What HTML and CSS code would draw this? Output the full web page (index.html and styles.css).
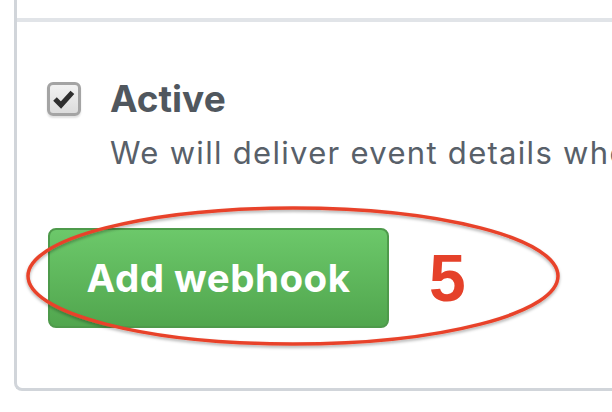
FILE: index.html
```html
<!DOCTYPE html>
<html lang="en">
<head>
  <meta charset="UTF-8" />
  <title>Add webhook</title>
  <meta name="viewport" content="width=device-width, initial-scale=1" />
  <link rel="stylesheet" href="styles.css">
</head>
<body>
  <div class="panel">
    <div class="panel-top"></div>

    <div class="section">
      <label class="option">
        <span class="checkbox">
          <svg viewBox="0 0 20 20" width="24" height="24">
            <path d="M2.5 10 L7.5 15 L17 4.5" fill="none" stroke="#2f2f2f" stroke-width="4.2" stroke-linejoin="miter" />
          </svg>
        </span>
        <span class="option-text">
          <span class="option-title">Active</span>
          <span class="option-note">We will deliver event details when this hook is triggered.</span>
        </span>
      </label>

      <div class="actions">
        <button class="btn-primary">Add webhook</button>
        <span class="step">5</span>
      </div>
    </div>
  </div>

  <!-- annotation drawn over the screenshot -->
  <svg class="callout" width="612" height="412" viewBox="0 0 612 412">
    <defs>
      <filter id="shadow" x="-10%" y="-10%" width="120%" height="130%">
        <feDropShadow dx="0" dy="2" stdDeviation="1.5" flood-color="#000" flood-opacity="0.3" />
      </filter>
    </defs>
    <ellipse cx="293" cy="276" rx="265" ry="68" fill="none" stroke="#e8432a" stroke-width="3.5" filter="url(#shadow)" />
  </svg>
</body>
</html>
```

FILE: styles.css
```css
* {
  box-sizing: border-box;
}
html, body {
  height: 100%;
}
body {
  margin: 0;
  position: relative;
  overflow: hidden;
  background: #fff;
  font-family: Inter, "Liberation Sans", Arial, sans-serif;
}
.panel {
  margin-left: 14px;
  width: 640px;
  height: 391px;
  border-left: 3px solid #d1d5da;
  border-bottom: 3px solid #d1d5da;
  border-bottom-left-radius: 8px;
}
.panel-top {
  height: 18px;
}
.section {
  border-top: 4px solid #e1e4e8;
  padding: 55px 0 0 30px;
}
.option {
  display: flex;
  align-items: flex-start;
  gap: 29px;
}
.checkbox {
  flex: none;
  width: 34px;
  height: 34px;
  margin-top: 5px;
  display: flex;
  align-items: center;
  justify-content: center;
  border: 3px solid #a4a4a4;
  border-radius: 6px;
  background: linear-gradient(#f2f2f2, #dcdcdc);
  box-shadow: 0 2px 2px rgba(0,0,0,0.12);
}
.option-text {
  display: flex;
  flex-direction: column;
  white-space: nowrap;
}
.option-title {
  font-size: 37px;
  line-height: 44px;
  font-weight: bold;
  color: #50575e;
}
.option-note {
  margin-top: 14px;
  font-size: 31px;
  line-height: 36px;
  letter-spacing: 1.3px;
  color: #586069;
}
.actions {
  display: flex;
  align-items: center;
  gap: 40px;
  margin-top: 57px;
  margin-left: 1px;
}
.btn-primary {
  width: 341px;
  height: 100px;
  padding: 0;
  font-family: inherit;
  font-size: 38.5px;
  letter-spacing: 0.5px;
  font-weight: bold;
  color: #fff;
  border: 2px solid #4e9a4b;
  border-radius: 8px;
  background: linear-gradient(#6cc86a, #51a64e);
}
.step {
  font-size: 66px;
  line-height: 66px;
  font-weight: bold;
  font-family: "Liberation Sans", Arial, sans-serif;
  color: #e5412a;
}
.callout {
  position: absolute;
  left: 0;
  top: 0;
  pointer-events: none;
}
```
